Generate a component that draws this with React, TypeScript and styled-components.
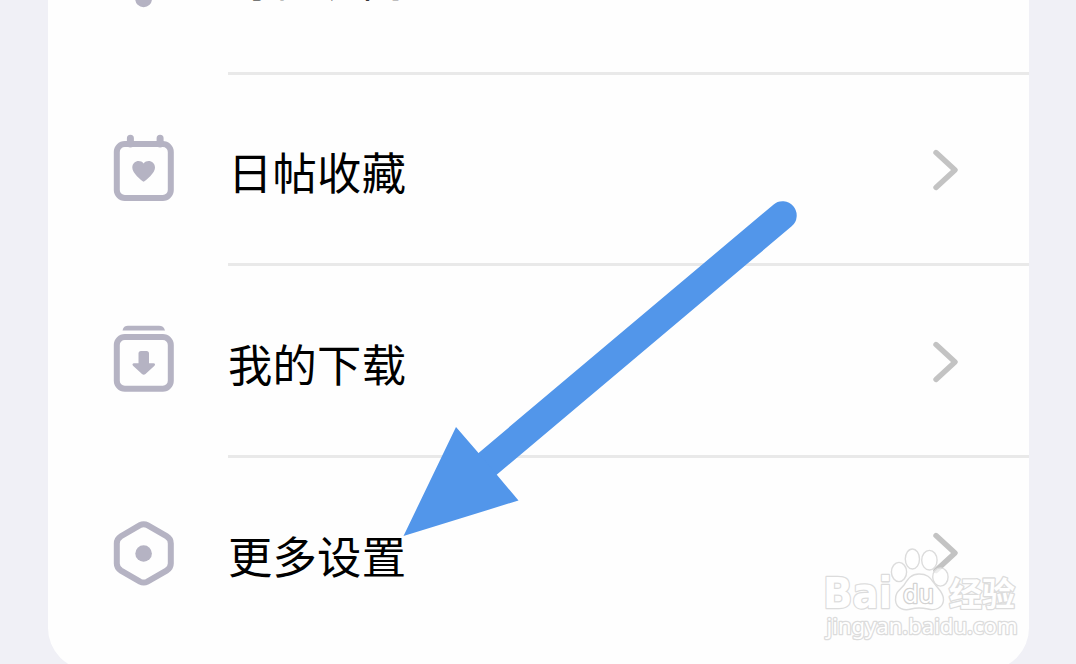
import styled, { createGlobalStyle } from "styled-components";

const GlobalStyle = createGlobalStyle`
  body {
    margin: 0;
    background-color: #f0f0f6;
    overflow: hidden;
  }
`;

const Page = styled.div`
  position: relative;
  height: 664px;
  box-sizing: border-box;
  padding: 0 47px 0 48px;
  overflow: hidden;
  font-family: "Noto Sans CJK SC", sans-serif;
`;

const Card = styled.div`
  display: flex;
  flex-direction: column;
  justify-content: flex-end;
  height: 670px;
  box-sizing: border-box;
  padding-bottom: 20.4px;
  background-color: #fefefe;
  border-radius: 0 0 42px 42px;
`;

const Row = styled.div`
  display: flex;
  flex-shrink: 0;
  height: 191.6px;
`;

const IconBox = styled.div`
  display: flex;
  align-items: center;
  width: 180px;
  padding-left: 64px;
  box-sizing: border-box;
`;

const Content = styled.div<{ $last?: boolean }>`
  display: flex;
  flex: 1;
  align-items: center;
  justify-content: space-between;
  padding-right: 70px;
  border-bottom: 3px solid ${({ $last }) => ($last ? "transparent" : "#e9e9e9")};
`;

const Label = styled.span<{ $first?: boolean }>`
  padding-top: ${({ $first }) => ($first ? 1 : 4.4)}px;
  font-size: 44.3px;
  line-height: 60px;
  letter-spacing: 0.25px;
  color: #000;
  white-space: nowrap;
`;

const ChevronIcon = styled.svg`
  margin-top: 2px;
`;

const Arrow = styled.svg`
  position: absolute;
  top: 0;
  left: 0;
`;

const Watermark = styled.svg`
  position: absolute;
  left: 816px;
  top: 540px;
`;

const WatermarkText = styled.text<{ $weight: number }>`
  font-family: "DejaVu Sans", sans-serif;
  font-weight: ${({ $weight }) => $weight};
  stroke-width: 2.6px;
  stroke-linejoin: round;
  paint-order: stroke;
`;

const WatermarkNoto = styled(WatermarkText)`
  font-family: "Noto Sans", "Noto Sans CJK SC", sans-serif;
`;

const color = "#b5b3c3";

const Svg = ({ children }: { children: React.ReactNode }) => (
  <svg width="64" height="76" viewBox="0 0 64 76" fill="none">
    {children}
  </svg>
);

const QuestionIcon = () => (
  <Svg>
    <circle cx="31.6" cy="57.8" r="8.4" fill={color} />
  </Svg>
);

const FavoriteIcon = () => (
  <Svg>
    <rect x="4.8" y="11" width="54" height="54" rx="8" stroke={color} strokeWidth="6" />
    <path d="M18.4 11V5.2M48.1 11V5.2" stroke={color} strokeWidth="7" strokeLinecap="round" />
    <path
      d="M31.6 48.7C29 47.5 20.3 40 20.3 34.8C20.3 28 28 26 31.6 30.5C35.2 26 43 28 43 34.8C43 40 34.2 47.5 31.6 48.7Z"
      fill={color}
    />
  </Svg>
);

const DownloadIcon = () => (
  <Svg>
    <rect x="4.8" y="13.1" width="54" height="51.7" rx="8" stroke={color} strokeWidth="6" />
    <path d="M10.5 6.5C11.3 3 13 1.8 16 1.8H47C50 1.8 52 3 53 6.5Z" fill={color} />
    <path
      d="M29 27H34.5Q37 27 37 29.5V39.2H41.5Q44 39.7 42.5 41.7L33.5 50Q31.7 51.5 30 50L21 41.7Q19.5 39.7 22 39.2H26.5V29.5Q26.5 27 29 27Z"
      fill={color}
    />
  </Svg>
);

const SettingsIcon = () => (
  <Svg>
    <path
      d="M28 9.2Q31.7 7.2 35.4 9.2L54.5 20.2Q58.8 22.8 58.8 27.5V47.5Q58.8 52 54.5 54.6L35.4 65.6Q31.7 67.6 28 65.6L9 54.6Q4.8 52 4.8 47.5V27.5Q4.8 22.8 9 20.2Z"
      stroke={color}
      strokeWidth="6"
    />
    <circle cx="31.6" cy="37.5" r="8.3" fill={color} />
  </Svg>
);

const Chevron = () => (
  <ChevronIcon width="28" height="44" viewBox="0 0 28 44" fill="none">
    <path
      d="M5 4.5L24 22L5 39.5"
      stroke="#c3c3c3"
      strokeWidth="5.4"
      strokeLinecap="round"
      strokeLinejoin="round"
    />
  </ChevronIcon>
);

const rows = [
  { label: "每日提问", icon: <QuestionIcon /> },
  { label: "日帖收藏", icon: <FavoriteIcon /> },
  { label: "我的下载", icon: <DownloadIcon /> },
  { label: "更多设置", icon: <SettingsIcon /> },
];

function App() {
  return (
    <>
      <GlobalStyle />
      <Page>
        <Card>
          {rows.map(({ label, icon }, index) => (
            <Row key={label}>
              <IconBox>{icon}</IconBox>
              <Content $last={index === rows.length - 1}>
                <Label $first={index === 0}>{label}</Label>
                <Chevron />
              </Content>
            </Row>
          ))}
        </Card>
        <Arrow width="1076" height="664" viewBox="0 0 1076 664">
          <path d="M782.5 215.5L472 477" stroke="#5296ea" strokeWidth="28.4" strokeLinecap="round" />
          <path d="M403.5 536L456 427L478.5 453L497 475L518.5 500.5Z" fill="#5296ea" />
        </Arrow>
        <Watermark width="212" height="108" viewBox="0 0 212 108">
          <g fill="#fff" stroke="#dcdcdc" strokeWidth="1.4">
            <WatermarkText $weight={700} x="7" y="68.3" fontSize="43" textLength="69" lengthAdjust="spacingAndGlyphs">
              Bai
            </WatermarkText>
            <g fillOpacity="0.7">
              <ellipse cx="83" cy="32" rx="7.6" ry="9.6" />
              <ellipse cx="96.4" cy="19" rx="7.1" ry="10" />
              <ellipse cx="113.4" cy="20.2" rx="7.7" ry="9.8" />
              <ellipse cx="124.4" cy="37" rx="7.7" ry="9.1" />
            </g>
            <path d="M103 34C95 34 92 39 88 45C84 50 79 52 79.5 60C80 69 89 71 95 69C101 67.5 107 68 112 69C119 71 127 68 127.5 60C128 52 121 48 118 43C114 37 111 34 103 34Z" />
            <WatermarkText $weight={400} x="87" y="63" fontSize="25" textLength="31" lengthAdjust="spacingAndGlyphs" stroke="#d2d2d2">
              du
            </WatermarkText>
            <WatermarkNoto $weight={700} x="133" y="66" fontSize="33">
              经验
            </WatermarkNoto>
            <WatermarkNoto $weight={400} x="10.5" y="94" fontSize="22" textLength="191" lengthAdjust="spacingAndGlyphs">
              jingyan.baidu.com
            </WatermarkNoto>
          </g>
        </Watermark>
      </Page>
    </>
  );
}

export default App;
